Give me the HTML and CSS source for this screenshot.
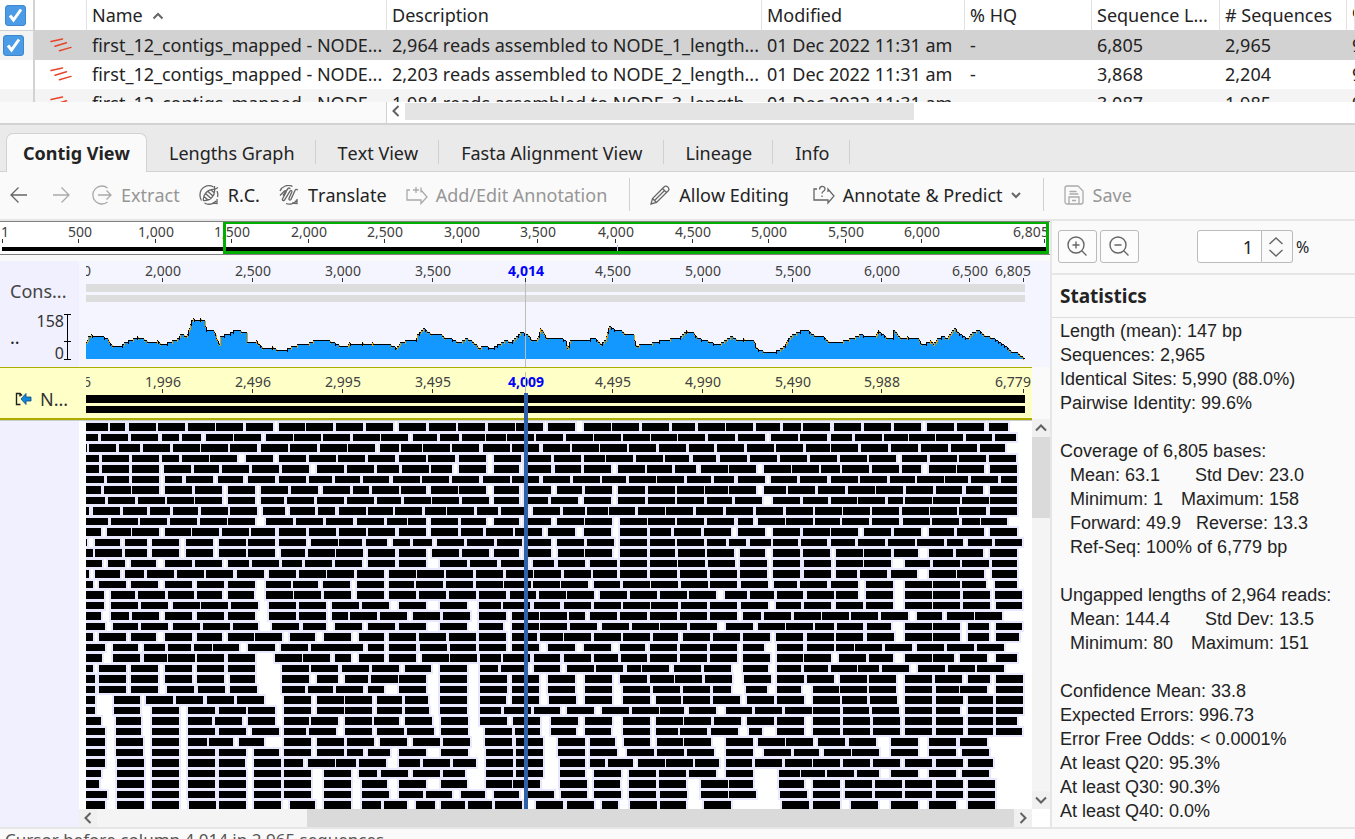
FILE: index.html
```html
<!DOCTYPE html>
<html lang="en">
<head>
<meta charset="utf-8">
<title>Contig View</title>
<link rel="stylesheet" href="styles.css">
</head>
<body>
<svg class="defs" aria-hidden="true">
  <symbol id="reads" viewBox="0 0 22 14"><path d="M1 3.600 12.500 1M5 8.200 16.500 4.800M9.500 12.700 21 9.400" fill="none" stroke="#e8442a" stroke-width="1.500" stroke-linecap="round"/></symbol>
  <symbol id="chev-left" viewBox="0 0 12 12"><path d="M8.500 1 3.500 6l5 5"/></symbol>
  <symbol id="chev-right" viewBox="0 0 12 12"><path d="M3.500 1l5 5-5 5"/></symbol>
  <symbol id="chev-up" viewBox="0 0 12 12"><path d="M1 8.500l5-5 5 5"/></symbol>
  <symbol id="chev-down" viewBox="0 0 12 12"><path d="M1 3.500l5 5 5-5"/></symbol>
</svg>

<section class="documents">
  <div class="table-clip">
    <table class="doc-table">
      <colgroup><col class="c-check"><col class="c-icon"><col class="c-name"><col class="c-desc"><col class="c-mod"><col class="c-hq"><col class="c-len"><col class="c-seq"><col class="c-rest"></colgroup>
      <thead><tr>
        <th class="check head-check"><input type="checkbox" checked aria-label="Select all"></th><th></th>
        <th>Name <svg class="sort" viewBox="0 0 12 8"><path d="M1.500 6.500 6 2l4.500 4.500"/></svg></th>
        <th>Description</th><th>Modified</th><th>% HQ</th><th>Sequence L...</th><th># Sequences</th><th>%</th>
      </tr></thead>
      <tbody>
        <tr class="selected"><td class="check"><input type="checkbox" checked aria-label="Select row"></td><td><svg class="reads-icon"><use href="#reads"/></svg></td><td>first_12_contigs_mapped - NODE...</td><td>2,964 reads assembled to NODE_1_length...</td><td>01 Dec 2022 11:31 am</td><td>-</td><td>6,805</td><td>2,965</td><td>9</td></tr>
        <tr><td class="check"></td><td><svg class="reads-icon"><use href="#reads"/></svg></td><td>first_12_contigs_mapped - NODE...</td><td>2,203 reads assembled to NODE_2_length...</td><td>01 Dec 2022 11:31 am</td><td>-</td><td>3,868</td><td>2,204</td><td>9</td></tr>
        <tr class="alt"><td class="check"></td><td><svg class="reads-icon"><use href="#reads"/></svg></td><td>first_12_contigs_mapped - NODE...</td><td>1,984 reads assembled to NODE_3_length...</td><td>01 Dec 2022 11:31 am</td><td>-</td><td>3,087</td><td>1,985</td><td>9</td></tr>
      </tbody>
    </table>
  </div>
  <div class="doc-scroll"><div class="doc-frozen"></div><button class="scroll-btn" aria-label="Scroll left"><svg class="chev"><use href="#chev-left"/></svg></button><div class="doc-thumb"></div></div>
</section>

<nav class="tabs" role="tablist">
  <button class="tab active" role="tab" aria-selected="true">Contig View</button>
  <button class="tab" role="tab">Lengths Graph</button>
  <button class="tab" role="tab">Text View</button>
  <button class="tab" role="tab">Fasta Alignment View</button>
  <button class="tab" role="tab">Lineage</button>
  <button class="tab" role="tab">Info</button>
</nav>

<div class="toolbar">
  <button class="tool nav" aria-label="Back"><svg viewBox="0 0 20 20"><path d="M18 10H2M9.500 2.500 2 10l7.500 7.500"/></svg></button>
  <button class="tool nav off" aria-label="Forward" disabled><svg viewBox="0 0 20 20"><path d="M2 10h16M10.500 2.500 18 10l-7.500 7.500"/></svg></button>
  <button class="tool off extract" disabled><svg viewBox="0 0 20 20"><path d="M15.500 3A9 9 0 1 0 15.500 17M6 10h13M14.500 5.500 19 10l-4.500 4.500"/></svg>Extract</button>
  <button class="tool"><svg viewBox="0 0 20 20"><path d="M2.500 15.500A9 9 0 0 1 1 10 9 9 0 0 1 14.500 2M18 6a9 9 0 0 1 .500 6M5.500 18A9 9 0 0 0 17 16M13.500 18l4.500.500V14M4.500 15.500C3.500 9.500 9 4 15.500 4.500 16.500 10.500 11 16 4.500 15.500zM15.500 4.500 19 2.500M15.500 4.500V1M5 11.500l4 3.500M6.500 8.500l5.500 5M9 6.500l5 4.500M12 5l3.500 3"/></svg>R.C.</button>
  <button class="tool"><svg viewBox="0 0 20 20"><path d="M1 6A9 9 0 0 1 13.500 1.500M1 10.500l4.500-4.500c1-.800 2 0 1.500 1.200L3.500 14c-.500 1.500 1 2.200 2 1L11 6.200c.800-1.200 2.200-.500 1.800.800L10 13.500c-.400 1.500 1 2 2 .800L16 5.500c.500-1.500 1.500-1.500 3-.500M4 10.500 9 3.500c.800-1 2.200-.500 1.800.800M7 18.500a9 9 0 0 0 10.500-3M13 18l5 .500V14"/></svg>Translate</button>
  <button class="tool off wide-tool add" disabled><svg class="wide" viewBox="0 0 22 20"><path d="M4 5H1v10h14v3.500L21 12l-6-7M7 5h6M10 2v6M15 7.500V2.500"/></svg>Add/Edit Annotation</button>
  <span class="divider"></span>
  <button class="tool edit"><svg viewBox="0 0 20 20"><path d="M1 19l1.500-5.500L14 2c2.500-2.500 6.500 1.500 4 4L6.500 17.500zM12.500 3.500l4 4M2.500 13.500l4 4M5 15 15 5"/></svg>Allow Editing</button>
  <button class="tool wide-tool annotate"><svg class="wide" viewBox="0 0 22 20"><path d="M4 4H1v11h14v3l6-7-6-7v3M6.500 4.500C6.500.500 12 .500 12 4c0 2.500-3 2-3 4.500M9 10.500v1.500"/></svg>Annotate &amp; Predict<svg class="caret" viewBox="0 0 10 8"><path d="M1 2l4 4 4-4"/></svg></button>
  <span class="divider"></span>
  <button class="tool off save" disabled><svg viewBox="0 0 20 20"><path d="M3 1h11l5 5v11a2 2 0 0 1-2 2H3a2 2 0 0 1-2-2V3a2 2 0 0 1 2-2zM5 19v-7h10v7M8 15.500h4M5.500 6.500h7M5.500 9h9"/></svg>Save</button>
</div>

<main class="work">
  <section class="viewer">
    <div class="overview">
      <div class="ruler" id="overview-ruler"></div>
      <div class="overview-bar"></div>
      <div class="window-box"></div>
      <div class="window-mark"></div>
    </div>
    <div class="consensus">
      <div class="names">
        <div class="cons-name">Cons...</div>
        <div class="scale"><span class="dots">..</span><div class="scale-nums"><span>158</span><span>0</span></div>
          <svg class="scale-axis" viewBox="0 0 7 46"><path d="M0 .500h7M3.500 0v46M0 27.500h7M0 45.500h7"/></svg></div>
      </div>
      <div class="plot">
        <div class="ruler" id="consensus-ruler"></div>
        <div class="seq grey"></div><div class="seq grey"></div>
        <svg class="coverage" id="coverage" viewBox="0 0 939 56" preserveAspectRatio="none"></svg>
        <div class="cursor-line"></div>
      </div>
    </div>
    <div class="reference">
      <div class="names"><svg class="ref-icon" viewBox="0 0 17 14"><path d="M5.500 12.500h-4v-11h3.500l2 2M5 1.500v3" fill="none" stroke="#222" stroke-width="1.400"/><path d="M6 7l5-5.500V5h5v4h-5v3.500z" fill="#1486d8" stroke="#0b4a86" stroke-width=".8"/></svg>N...</div>
      <div class="plot">
        <div class="ruler" id="reference-ruler"></div>
        <div class="seq"></div><div class="seq"></div>
        <div class="cursor-line short"></div><div class="cursor-bar low"></div>
      </div>
    </div>
    <div class="alignment">
      <div class="names"></div>
      <div class="plot"><svg class="read-map" id="read-map" viewBox="0 0 939 390" preserveAspectRatio="none"></svg><div class="cursor-bar"></div></div>
      <div class="v-scroll"><button class="scroll-btn" aria-label="Scroll up"><svg class="chev"><use href="#chev-up"/></svg></button><div class="v-thumb"></div><button class="scroll-btn last" aria-label="Scroll down"><svg class="chev"><use href="#chev-down"/></svg></button></div>
    </div>
    <div class="h-scroll"><div class="names"></div><button class="scroll-btn" aria-label="Scroll left"><svg class="chev"><use href="#chev-left"/></svg></button><div class="h-track"></div><div class="h-thumb"></div><button class="scroll-btn" aria-label="Scroll right"><svg class="chev"><use href="#chev-right"/></svg></button><div class="corner"></div></div>
  </section>
  <aside class="panel">
    <div class="zoom-row">
      <button class="zoom-btn" aria-label="Zoom in"><svg viewBox="0 0 20 20"><circle cx="9" cy="9" r="8"/><path d="M15 15l4.500 4.500M9 5.500v7M5.500 9h7"/></svg></button>
      <button class="zoom-btn" aria-label="Zoom out"><svg viewBox="0 0 20 20"><circle cx="9" cy="9" r="8"/><path d="M15 15l4.500 4.500M5.500 9h7"/></svg></button>
      <label class="percent"><input type="text" value="1" aria-label="Zoom percent"><span class="spin"><svg viewBox="0 0 16 20"><path d="M1.500 7 8 1l6.500 6M1.500 13 8 19l6.500-6"/></svg></span>%</label>
    </div>
    <h2>Statistics</h2>
    <pre class="stats">Length (mean): 147 bp
Sequences: 2,965
Identical Sites: 5,990 (88.0%)
Pairwise Identity: 99.6%

Coverage of 6,805 bases:
<span class="grid g1"><span>Mean: 63.1</span><span>Std Dev: 23.0</span></span><span class="grid g2"><span>Minimum: 1</span><span>Maximum: 158</span></span><span class="grid g3"><span>Forward: 49.9</span><span>Reverse: 13.3</span></span><span class="grid g0"><span>Ref-Seq: 100% of 6,779 bp</span></span>
Ungapped lengths of 2,964 reads:
<span class="grid g4"><span>Mean: 144.4</span><span>Std Dev: 13.5</span></span><span class="grid g5"><span>Minimum: 80</span><span>Maximum: 151</span></span>
Confidence Mean: 33.8
Expected Errors: 996.73
Error Free Odds: &lt; 0.0001%
At least Q20: 95.3%
At least Q30: 90.3%
At least Q40: 0.0%</pre>
  </aside>
</main>
<footer class="status">Cursor before column 4,014 in 2,965 sequences</footer>
<script src="viewer.js"></script>
</body>
</html>
```
FILE: styles.css
```css
* { box-sizing: border-box; }
body { margin: 0; height: 100vh; overflow: hidden; display: flex; flex-direction: column; background: #fafafa; color: #232323; font: 18px/24px "Noto Sans", sans-serif; font-kerning: none; }
button, input { font: inherit; font-kerning: inherit; color: inherit; margin: 0; }
button { border: 0; padding: 0; background: none; }
svg { flex: none; }
.defs { position: absolute; width: 0; height: 0; }
.chev { display: block; width: 12px; height: 12px; fill: none; stroke: #606060; stroke-width: 2; }
.scroll-btn { display: flex; align-items: center; justify-content: center; background: #f0f0f0; }

.documents { flex: none; border-bottom: 2px solid #d2d2d2; }
.table-clip { height: 102px; overflow: hidden; background: #fff; }
.doc-table { table-layout: fixed; width: 100%; min-width: 1355px; border-collapse: separate; border-spacing: 0; }
.c-check { width: 35px; } .c-icon { width: 52px; } .c-name { width: 300px; } .c-desc { width: 375px; } .c-mod { width: 203px; } .c-hq { width: 127px; } .c-len { width: 128px; } .c-seq { width: 127px; }
.doc-table th, .doc-table td { padding: 0 0 0 5px; height: 29px; text-align: left; font-weight: 400; white-space: nowrap; overflow: hidden; }
.doc-table th { height: 31px; border-right: 1px solid #e2e2e2; border-bottom: 1px solid #d2d2d2; }
.doc-table td { padding-bottom: 2px; }
.doc-table .check { border-right: 2px solid #d2d2d2; padding: 0 0 0 3px; }
.doc-table .head-check { padding-left: 5px; }
.selected td { background: #d2d2d2; }
.alt td, .selected .check { background: #f4f4f4; }
.check input { display: block; appearance: none; width: 21px; height: 21px; border: 1px solid #3f86cc; border-radius: 3px; background: #4c9be6 url("data:image/svg+xml,%3Csvg xmlns='http://www.w3.org/2000/svg' viewBox='0 0 19 19'%3E%3Cpath d='M4 9.500l3.500 4.500L15 3.500' fill='none' stroke='white' stroke-width='3'/%3E%3C/svg%3E"); }
.sort { width: 12px; height: 8px; margin-left: 5px; vertical-align: 2px; fill: none; stroke: #666; stroke-width: 2; }
.reads-icon { display: block; width: 22px; height: 14px; margin-left: 10px; }
.doc-scroll { display: flex; height: 21px; padding-bottom: 3px; background: #fff; }
.doc-frozen { width: 387px; height: 21px; background: #fafafa; border-right: 1px solid #d2d2d2; }
.doc-scroll .scroll-btn { width: 18px; background: #fff; }
.doc-thumb { width: 54%; max-width: 509px; background: #e4e4e4; margin-top: 1px; }

.tabs { flex: none; display: flex; align-items: flex-end; height: 47px; padding-left: 6px; background: #eaeaea; border-bottom: 1px solid #d2d2d2; }
.tab { position: relative; height: 38px; padding: 2px 21px 0 22px; white-space: nowrap; }
.tab::after { content: ""; position: absolute; right: 0; top: 7px; width: 1px; height: 24px; background: #d0d0d0; }
.tab.active { padding: 0 16px; margin-bottom: -1px; height: 39px; background: #fafafa; border: 1px solid #d2d2d2; border-bottom: 0; border-radius: 7px 7px 0 0; font-weight: 700; }
.tab.active::after { display: none; }

.toolbar { flex: none; display: flex; align-items: center; height: 49px; padding: 0 0 2px 9px; border-bottom: 2px solid #e6e6e6; }
.tool { display: flex; align-items: center; gap: 9px; margin-right: 19px; white-space: nowrap; }
.tool svg { width: 20px; height: 20px; fill: none; stroke: #666; stroke-width: 1.300; }
.tool svg.wide { width: 22px; }
.tool svg.caret { width: 10px; height: 8px; stroke-width: 2; }
.tool.nav { margin-right: 22px; }
.tool.nav + .extract { margin-left: -1px; }
.tool.off { color: #969696; }
.tool.off svg { stroke: #aaa; }
.divider { width: 1px; height: 33px; background: #d0d0d0; }
.tool.wide-tool { gap: 8px; margin-right: 22px; }
.tool.edit { margin-left: 20px; margin-right: 24px; }
.tool.save { margin-left: 20px; }

.work { flex: 1; min-height: 0; display: flex; }
.viewer { flex: 1; min-width: 0; display: flex; flex-direction: column; }
.ruler { position: relative; height: 23px; font-size: 14px; line-height: 20px; color: #404040; }
.ruler span { position: absolute; top: 0; transform: translateX(-50%); }
.ruler i { position: absolute; top: 17px; width: 1px; height: 4px; background: #333; }
.ruler .now { color: #00f; font-weight: 700; }
.overview { position: relative; flex: none; height: 34px; background: #fff; border: 1px solid #808080; border-width: 1px 0; overflow: hidden; }
.overview-bar { height: 4px; margin: 2px 4px 0 2px; background: #000; }
.window-box { position: absolute; left: 21.25%; right: 1px; top: 0; bottom: 0; border: 3px solid #00ad00; border-top-width: 2px; }
.window-mark { position: absolute; left: 58.8%; top: 23px; width: 1px; height: 6px; background: #bcc8e8; }
.names { flex: none; width: 79px; background: #f0f0ff; }
.plot { position: relative; flex: 1; min-width: 0; margin: 0 25px 0 7px; }
.plot .ruler { clip-path: inset(0 -10px 0 0); }
.consensus { flex: none; display: flex; height: 106px; margin-top: 6px; background: #f5f5ff; }
.cons-name { padding: 18px 0 0 10px; color: #444; }
.scale { display: flex; align-items: center; margin-top: 11px; padding-left: 10px; height: 46px; }
.dots { width: 14px; }
.scale-nums { width: 40px; height: 46px; display: flex; flex-direction: column; justify-content: space-between; align-items: flex-end; font-size: 16px; line-height: 14px; color: #333; }
.scale-axis { width: 7px; height: 46px; stroke: #000; }
.seq { height: 8px; margin-bottom: 3px; background: #000; }
.seq + .seq { height: 7px; margin-bottom: 4px; }
.seq.grey { background: #ddd; }
.coverage { display: block; width: 100%; height: 56px; }
.cursor-line { position: absolute; left: 46.75%; top: 21px; bottom: 0; width: 1px; background: #bcbcbc; }
.cursor-line.short { top: 0; height: 22px; }
.cursor-bar { position: absolute; z-index: 1; left: 46.65%; top: 0; bottom: 0; width: 4px; background: #3060a8; }
.cursor-bar.low { top: 21px; bottom: -3px; }
.reference { flex: none; display: flex; height: 53px; margin-right: 18px; padding-top: 4px; background: #ffffc8; border: 1px solid #adad00; border-width: 1px 0 2px; }
.reference .names { display: flex; align-items: center; gap: 8px; padding: 8px 0 0 15px; background: none; color: #333; }
.reference .plot { margin-right: 7px; }
.ref-icon { width: 17px; height: 14px; }
.alignment { flex: 1; min-height: 0; display: flex; background: #fff; border-top: 1px solid #ccc; }
.alignment .plot { margin-right: 7px; overflow: hidden; }
.read-map { display: block; width: 100%; height: 390px; shape-rendering: crispEdges; }
.v-scroll { display: flex; flex-direction: column; width: 18px; margin-top: -2px; background: #f4f4f4; }
.v-scroll .scroll-btn { height: 18px; }
.v-thumb { height: 81px; background: #dadada; }
.last { margin-top: auto; }
.h-scroll { flex: none; display: flex; height: 18px; background: #f4f4f4; }
.h-scroll .scroll-btn { width: 18px; }
.h-track { flex: 210; } .h-thumb { flex: 706; background: #dadada; }
.corner { width: 18px; background: #fff; }

.panel { flex: none; width: 305px; border-left: 2px solid #e6e6e6; overflow: hidden; }
.zoom-row { display: flex; gap: 3px; height: 54px; padding: 9px 0 0 6px; border-bottom: 2px solid #e6e6e6; }
.zoom-btn { display: flex; align-items: center; justify-content: center; width: 39px; height: 33px; padding: 0 2px 2px 0; border: 1px solid #bbb; border-radius: 3px; background: #fcfcfc; }
.zoom-btn svg { width: 20px; height: 20px; fill: none; stroke: #666; stroke-width: 1.400; }
.percent { display: flex; align-items: center; height: 33px; margin-left: 55px; font-size: 16px; }
.percent input { width: 65px; height: 33px; border: 1px solid #bbb; border-radius: 3px 0 0 3px; background: #fff; padding: 0 8px; text-align: right; font-size: 18px; }
.spin { display: flex; align-items: center; justify-content: center; width: 31px; height: 33px; margin-right: 3px; padding-right: 2px; border: 1px solid #bbb; border-left: 0; border-radius: 0 3px 3px 0; }
.spin svg { width: 16px; height: 20px; fill: none; stroke: #666; stroke-width: 1.400; }
h2 { margin: 0; height: 43px; padding: 9px 0 0 8px; border-bottom: 1px solid #ddd; font-size: 19px; line-height: 24px; font-kerning: auto; }
.stats { margin: 0; padding: 1px 0 0 8px; font: 18px/24px "Liberation Sans", Arial, sans-serif; font-kerning: none; }
.grid { display: grid; grid-template-columns: 125px 1fr; padding-left: 10px; height: 24px; }
.grid.g0 { grid-template-columns: 1fr; }
.grid.g2 { grid-template-columns: 111px 1fr; } .grid.g3 { grid-template-columns: 126px 1fr; }
.grid.g4 { grid-template-columns: 135px 1fr; } .grid.g5 { grid-template-columns: 121px 1fr; }

.status { flex: none; height: 12px; padding-left: 5px; border-top: 2px solid #e6e6e6; overflow: hidden; font-size: 17px; line-height: 22px; color: #555; }
```
FILE: viewer.js
```js
// Rulers: [label, tick position, label position]; null tick means it lies outside the view.
function ruler(id, width, marks) {
  document.getElementById(id).innerHTML = marks.map(([label, tick, at, now]) =>
    `<span class="${now ? "now" : ""}" style="left:${((at ?? tick) + 1) / width * 100}%">${label}</span>` +
    (tick === null ? "" : `<i style="left:${tick / width * 100}%"></i>`)).join("");
}
ruler("overview-ruler", 1050, [["1", 2, 4], ["500", 78, 79], ["1,000", 155], ["1,500", 231], ["2,000", 308], ["2,500", 384], ["3,000", 461], ["3,500", 537], ["4,000", 615], ["4,500", 692], ["5,000", 768], ["5,500", 845], ["6,000", 921], ["6,805", 1044, 1030]]);
ruler("consensus-ruler", 939, [["1,500", null, -14], ["2,000", 76], ["2,500", 166], ["3,000", 256], ["3,500", 346], ["4,014", 439, 439, 1], ["4,500", 526], ["5,000", 616], ["5,500", 706], ["6,000", 795], ["6,500", 883], ["6,805", 937, 926]]);
ruler("reference-ruler", 939, [["1,496", null, -14], ["1,996", 76], ["2,496", 166], ["2,995", 256], ["3,495", 346], ["4,009", 439, 439, 1], ["4,495", 526], ["4,990", 616], ["5,490", 706], ["5,988", 795], ["6,779", 937, 926]]);

// Coverage profile: x:height
const profile = "0:16 2:21 5:23 16:22 21:19 24:14 29:11 35:12 39:16 47:19 51:21 57:19 62:16 67:15 71:17 76:13 81:15 91:19 94:24 100:22 103:30 105:37 107:39 111:37 114:39 118:37 120:27 127:28 131:18 133:14 134:22 144:25 147:27 151:28 160:25 161:16 165:15 170:17 173:13 177:10 186:11 191:8 197:7 201:9 207:12 214:14 221:14 224:16 229:18 234:17 239:18 247:16 252:13 261:12 263:15 267:13 276:15 281:13 286:15 297:14 304:13 310:10 314:15 321:18 329:17 331:24 335:27 338:30 341:26 347:23 354:24 359:19 364:20 369:17 372:15 376:17 380:20 385:17 390:13 392:10 397:12 406:10 409:12 416:16 419:18 424:16 431:22 434:26 441:24 444:20 446:17 451:19 454:29 457:26 459:21 464:20 476:19 479:18 481:10 484:18 494:17 499:18 509:20 511:17 514:14 519:18 521:26 523:32 527:29 531:27 534:28 537:25 547:23 549:14 551:11 554:14 561:13 566:15 576:18 584:19 592:20 597:24 600:27 607:25 611:20 621:17 626:15 631:13 641:19 645:22 651:18 657:19 667:18 669:12 672:8 681:6 686:5 691:8 696:10 700:15 702:20 706:23 714:27 722:28 724:25 727:23 737:21 741:18 742:15 751:15 757:17 769:21 774:24 782:21 789:22 792:27 797:23 801:20 806:19 807:28 810:25 814:20 821:21 832:19 834:15 836:13 844:17 847:14 851:19 856:22 861:20 865:26 869:30 872:25 877:22 881:19 884:24 892:28 897:23 907:20 914:15 920:11 924:7 931:5 936:1 939:0"
  .split(" ").map(p => p.split(":").map(Number));
{
  const base = 53;
  const h = [];
  for (let i = 0; i + 1 < profile.length; i++) {
    const [x0, a] = profile[i], [x1, b] = profile[i + 1];
    for (let x = x0; x < x1; x++) h[x] = Math.round((a + (b - a) * (x - x0) / (x1 - x0)) / 2) * 2;
  }
  let fill = `M0 ${base}`, line = "", spikes = "";
  h.forEach((v, x) => {
    const y = base - v, prev = h[x - 1] ?? v;
    fill += `V${y}h1`;
    const top = Math.min(y, base - prev), tall = Math.abs(v - prev);
    if (tall > 0 && x % 3) spikes += `M${x} ${top}h1v${tall + 1}h-1z`;
    else if (tall > 0) line += `M${x} ${top}h1v${tall + 1}h-1z`;
    line += `M${x} ${y - 1}h1v1h-1z`;
  });
  document.getElementById("coverage").innerHTML =
    `<g shape-rendering="crispEdges"><path fill="#1298ff" d="${fill}V${base}z"/><path fill="#e0a000" d="${spikes}"/><path d="${line}"/></g>`;
}

// Packed reads, one line per row: start or start:width. A full read is 27 wide.
const rows = `0:22 24:15 43 72 102 130 160 193 220 250 280 313 343 372 402 430 462 498 526 556 586:23 612 640 670:24 697:18 717 748 778 808 841 871 903:19
0:12 15 45 76:17 96:19 120 148 180 208 237 267 295 327:24 354:19 376:23 400:20 421 450 480 508 537 565 592 622 652 685 714 745:21 769 798:24 823:26 850 880:26 909:21
0:1 3 33:21 57 87 115 144 175 204 234 262 294:19 315:21 337 366 397 426 457 486 514 543 573 603:25 631 661 690 720:24 745 775 805 835 865:26 894:25
0:13 16 46 76:17 96 124 160 193 223 252 282 313 342 373 408 438 468 498:21 520 550 579:24 607:23 634 664 694 724 754 783 816:25 844 873 903
0:13 16 46 78 108:25 136 166 196 231 261 291:22 316 345:21 373 408:25 438 469:26 498 532 561:25 589:21 615 643 678 706 735:19 756 786 816:19 843 871 904
0:18 21:22 46 79:17 100 132:25 162 193 223:23 249:25 277:26 307 336 366 397 426 457 487 516:24 543 571 601:24 628:20 652 685:26 714 745 774 804:25 831 859:23 885 915:16
0:15 18 46 79 109 142 175 205 237 267:16 286 315:25 345 373 408:25 438 471:25 499 532 562 591 619:23 643 678:22 702 732 762 790 820 850:26 880:17 904
0:19 22 52 81 109 142 175:23 201 231 261 291:24 318 346 376 408:25 438:24 465 498 532 562 591 621:25 649 687 717:25 745:26 772 802:15 819 847 876 904
0:3 7 37:24 64:20 87:25 115 144 177:22 204:25 232:17 253 282:25 309 339:21 361 391:21 415 447 477:22 501:21 523:26 552 580 610 640 670 700 729 757 786 816 844 873 904
0:22 25 54 84 114 142 180 210 240 271 301:20 322:18 345 375:25 408:25 438 471 499 534 562 591 621 652:15 672 700 729:25 756 786 817 846 876:18 895:26
0:15 21:24 46 79 106 136 165:24 193 223 253 282 313 345 375:22 400 429 462 498 534 564:21 588 618 652 687 717 745 778 808 843:25 871 904
0:1 9:25 39:22 66 100 133 162 193 225 253:23 280:21 307:17 327:19 351 381 411:25 438 471 501 534 564:25 591 621:19 643:17 664:21 687:25 715:26 745:24 772 802 831 861:16 882:24 909
0:7 9 39:22 66 100 133 162 195:24 222 250 282 313 346 376 408:25 438 472:26 499 534 564:25 592 621 654:25 687 717 750 778 808:24 843:24 870 904
0:16 22:17 45:25 79 109 142:21 166 196:20 219 249 282 313 354 384 415 447:21 472 504 534 564 592 622 654 687 718 750 778 819:25 847 876 906:25
0:3 9:25 39:19 61 91 120 151 183 213 241 271 303 331 360 390 420 448 478 507:24 534 564 594 624 654 687 718 750:21 774 805:26 843 871 906:25
0:7 13 45 79 111 142 180:25 207:25 237 271 303:25 330 360 390 418 447 475 508:26 537 565 595 624 655 688:23 714 745 780 819 847 876:24 909:22
0:18 25:24 52 82:26 111:25 142:26 180 208 238 271 303 333 363 393 424:26 453 481 514 544 574 603 639:22 664:24 691:26 721 750:22 780 819 847 877 909
0:18 25 55 87 115 145 183 213 246 276 313 354 393:22 417 448:26 478 508 537 565 595:26 624 655 690:25 718 750 780 819 847 877 910:26
0:15 25:18 46 79 111 142 183 213 246:16 264 294 327 357 393 426 454 483:16 504 534 564 594 624 657:18 678 708 736 765 795 831:25 861 889
0:19 27:25 55 87 117 147:25 186 217:23 249 282 313 354 393:24 426 454 484 516 546 574 604 640 672 700 729:19 751:26 781:24 819 847 882:21 910:26
0:7 13 45:25 79 111:25 142:26 169 204:25 238 273:25 303 333 363 393 426:25 454:23 478 508 537 567:25 597 627 657 690 721 750 781 819 847 882:21 910:23
0:19 27:25 58:21 82:23 108:18 127:26 162 195 225:25 250 282:16 303 334 364:26 393 426 462 498 534:25 564 594 624 657:21 691:26 721 750:18 769 799 831 861 891
0:16 27 58:23 82 111 142 189 217 249:16 273:25 303 336 364 394:21 417 448:26 478 508:24 535:26 564 594 624 657 691:26 718 753 783:24 819 847:21 874 910:21
0:7 13 45 79 111 142 196 225 256 286 319:26 354 394:18 415 448:26 481 510 541:14 556 588 618 657:25 691:24 718:24 745:26 772:21 796 832 862 891
0:9 13 45 79 111 144:25 196 231:21 259:23 285 313 354 394 426 462 499 534 564:24 589 619 658 691 721 754 783 819 849 882:22 910
0:9 13 45 81 112 144 196:23 222:25 250 282:16 313 354 394 426 462 499 537 567 597 627:18 660:21 691:24 727:26 754 783 819 850:23 874 910
0:9 28:26 60 90 121 151 198 231 259 291:25 319:23 354 394:26 426 463 499 537 570:25 597 627 661 691 727 756:25 784 819 850 882:25 910
0:9 28:26 66 102 133 162 198 231 259 291:25 319:24 354 394:21 418 448:26 481 516 546 574:24 603 640:26 669 699 727 757:26 786 819 850:24 882:25 910
0:15 30:25 66 102:24 129 162 198:25 225 259 288:25 319 355 394 427 465 499 537 570 598 628 661 691 727 757 787 819 850 882:25 910:21
0:19 30:25 66 102 133 166 198:22 223 259 291 321 355 399 429:25 465:25 499:26 537 570:22 594 625 663:13 691 727 757 787 819 850 882:25 910:26
0:19 30 66 102:19 123:24 153:25 198 231 261 294 327 357 399 430 472 504:25 538:26 571 598 640 672 700 732 763 805 843 874
0:19 30 66 102 133 168:25 198 231 261:16 282:22 313 355 400 430 472 504 541 571 601 640 678 708:25 738 766 805 843 876
0:19 31 66 102 133:26 168 198:19 222 250:20 273 313:21 337 367:23 400 430 474:25 504:15 522:25 552 580 609:24 640:26 669 699 727 757 787 819 850 882:25
0:15 31 66 102 133 168 198 238 273:18 295 327 357:22 400 430 474:25 508 543 573 603 640 693:21 715:24 741 771:22 805 843 876
0:13 31 66 102 133 168 198 238 276:25 313 355:26 400 427 474 508:26 543 573 615 643:24 693:25 727 759 789 819 850 882
0:21 31 66 102 133 168 198 238 276 313:24 340:26 375:24 408:25 441 475:26 508 543 574 615 643 694 727 759 789 819 850 882
0:19 31 66 103 133 168 204:25 238 276:19 298:23 330:19 355:24 382:24 409 450 481 516:16 544 574:26 618 696 727 765 805 843 882`;
let halo = "", bars = "";
rows.split("\n").forEach((row, i) => {
  const y = Math.round(2 + i * 10.5), height = i % 2 ? 7 : 8;
  const reads = row.trim().split(" ").map(t => t.split(":").map(Number));
  reads.forEach(([x, given], k) => {
    const room = k + 1 < reads.length ? reads[k + 1][0] - x : 30;
    const w = given ?? (room > 27 ? 27 : room - 1);
    halo += `M${x - 2} ${y - 2}h${w + 4}v${height + 4}h${-w - 4}z`;
    bars += `M${x} ${y}h${w}v${height}h${-w}z`;
  });
});
document.getElementById("read-map").innerHTML = `<path fill="#e8e8ff" d="${halo}"/><path d="${bars}"/>`;
```
